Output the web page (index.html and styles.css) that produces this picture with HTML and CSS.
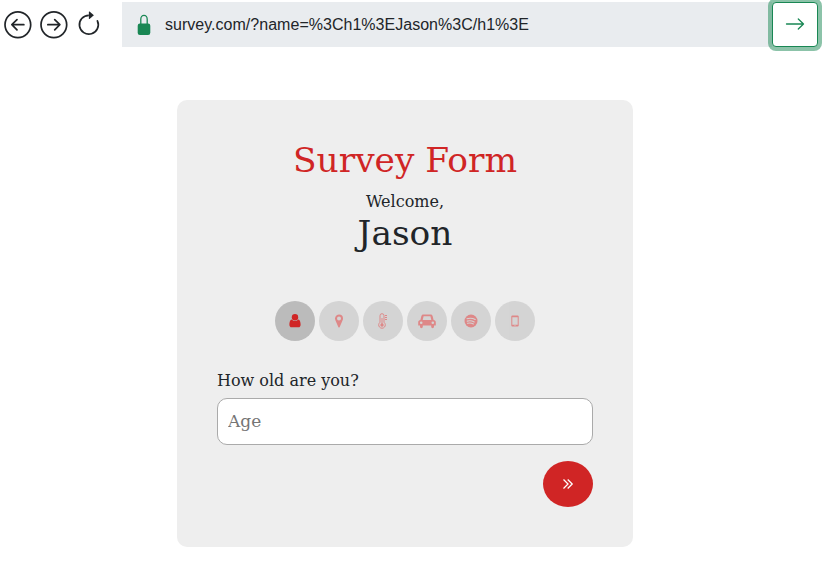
FILE: index.html
```html
<!DOCTYPE html>
<html lang="en">
<head>
<meta charset="utf-8">
<title>Survey Form</title>
<link rel="stylesheet" href="styles.css">
</head>
<body>
<header class="browser-bar">
  <nav class="nav">
    <svg class="nav-icon" viewBox="0 0 16 16"><path fill-rule="evenodd" d="M1 8a7 7 0 1 0 14 0A7 7 0 0 0 1 8zm15 0A8 8 0 1 1 0 8a8 8 0 0 1 16 0zm-4.500-.5a.5.5 0 0 1 0 1H5.707l2.147 2.146a.5.5 0 0 1-.708.708l-3-3a.5.5 0 0 1 0-.708l3-3a.5.5 0 1 1 .708.708L5.707 7.500H11.500z"/></svg>
    <svg class="nav-icon" viewBox="0 0 16 16"><path fill-rule="evenodd" d="M1 8a7 7 0 1 0 14 0A7 7 0 0 0 1 8zm15 0A8 8 0 1 1 0 8a8 8 0 0 1 16 0zM4.500 7.500a.5.5 0 0 0 0 1h5.793l-2.147 2.146a.5.5 0 0 0 .708.708l3-3a.5.5 0 0 0 0-.708l-3-3a.5.5 0 1 0-.708.708L10.293 7.500H4.500z"/></svg>
    <svg class="nav-icon reload" viewBox="0 0 16 16"><path fill-rule="evenodd" d="M8 3a5 5 0 1 0 4.546 2.914.5.5 0 0 1 .908-.417A6 6 0 1 1 8 2v1z"/><path d="M8 4.466V.534a.25.25 0 0 1 .41-.192l2.360 1.966c.12.1.12.284 0 .384L8.410 4.658A.25.25 0 0 1 8 4.466z"/></svg>
  </nav>
  <div class="address">
    <svg class="lock" viewBox="0 0 14 22"><path d="M3.800 10V5.200a3.200 3.800 0 0 1 6.400 0V10" fill="none" stroke="currentColor" stroke-width="1.300"/><rect x=".7" y="9.500" width="12.600" height="11.500" rx="2.200"/></svg>
    <span class="url">survey.com/?name=%3Ch1%3EJason%3C/h1%3E</span>
  </div>
  <button class="go" aria-label="Go"><svg viewBox="0 0 20 16"><path d="M1.500 8h17M13.300 3 18.500 8l-5.200 5" fill="none" stroke="currentColor" stroke-width="1.300" stroke-linecap="round" stroke-linejoin="round"/></svg></button>
</header>
<main class="card">
  <h1 class="title">Survey Form</h1>
  <div class="welcome">Welcome,</div>
  <h1 class="name">Jason</h1>
  <div class="steps">
    <span class="step active"><svg width="12" height="14" viewBox="0 0 12 14"><circle cx="6" cy="3.300" r="3.200"/><path d="M2.700 5.400Q4.300 7 6 7T9.300 5.400C11 5.700 11.600 8 11.600 10.700c0 1.500-.8 2.600-2.100 2.600h-7C1.200 13.300.4 12.200.4 10.700.4 8 1 5.700 2.700 5.400z"/></svg></span>
    <span class="step"><svg width="8" height="14" viewBox="0 0 8 14"><path fill-rule="evenodd" d="M4 .5a4 4 0 0 1 4 4c0 .7-.1 1.200-.4 1.800L4.700 12.900q-.7 1.200-1.400 0L.4 6.300A4 4 0 0 1 4 .5zm0 2a2 2 0 1 0 0 4 2 2 0 0 0 0-4z"/></svg></span>
    <span class="step"><svg width="10" height="16" viewBox="0 0 10 16"><path d="M2 9.300V2.700a2 2 0 0 1 4 0v6.600a3.300 3.300 0 1 1-4 0z" fill="none" stroke="currentColor"/><circle cx="4" cy="12" r="1.700"/><path d="M3.500 5h1v7h-1zM7 2h2v1H7zm0 2h2v1H7zm0 2h2v1H7z"/></svg></span>
    <span class="step"><svg width="18" height="14" viewBox="0 0 18 14"><path fill-rule="evenodd" d="M5.300.5h7.400c1 0 1.700.6 1.900 1.500l1 4c1.300.1 2.200 1 2.200 2.200v3q0 .4-.4.4H16v1.200a1.400 1.400 0 0 1-2.800 0v-1.200H4.800v1.200a1.400 1.400 0 0 1-2.800 0v-1.200H.6q-.4 0-.4-.4v-3C.2 7 1.100 6.100 2.400 6l1-4C3.600 1.100 4.300.5 5.300.5zm.3 1.700L4.700 5.900h8.600l-.9-3.700zM3.200 7.400a1.300 1.300 0 1 0 0 2.600 1.300 1.300 0 0 0 0-2.600zm11.600 0a1.300 1.300 0 1 0 0 2.600 1.300 1.300 0 0 0 0-2.600z"/></svg></span>
    <span class="step"><svg width="14" height="14" viewBox="0 0 14 14"><circle cx="7" cy="7" r="6.500"/><path d="M3 4.700q4.400-1.200 8.200.8M3.200 7.100q3.800-1 7 .8M3.500 9.300q3.300-.7 5.900.7" fill="none" stroke="#bbb" stroke-width="1.100" stroke-linecap="round"/></svg></span>
    <span class="step"><svg width="8" height="14" viewBox="0 0 8 14"><path fill-rule="evenodd" d="M1.400 1.500h5.200q1.100 0 1.100 1.100v8.800q0 1.100-1.100 1.100H1.400Q.3 12.500.3 11.400V2.600q0-1.100 1.100-1.100zM1.300 3.300v7.400h5.400V3.300z"/><circle cx="4" cy="11.600" r=".5" fill="#bbb"/></svg></span>
  </div>
  <label class="label" for="age">How old are you?</label>
  <input class="field" id="age" placeholder="Age">
  <button class="next" aria-label="Next"><svg width="12" height="12" viewBox="0 0 12 12"><path d="m1.500 1.500 4.500 4.500-4.500 4.500M5.700 1.500l4.500 4.500-4.500 4.500" fill="none" stroke="currentColor" stroke-width="1.300"/></svg></button>
</main>
</body>
</html>
```
FILE: styles.css
```css
* { box-sizing: border-box; }
body { margin: 0; background: #fff; color: #212529; font: 16px/24px "DejaVu Serif", serif; overflow: hidden; }
svg { display: block; fill: currentColor; overflow: visible; }
.browser-bar { display: flex; height: 45px; margin: 2px 4px 0 4px; font-family: "Liberation Sans", sans-serif; }
.nav { display: flex; gap: 8px; width: 118px; padding-top: 9px; }
.nav-icon { width: 28px; height: 28px; padding: 0 .3px .6px 0; }
.reload { margin-left: -1px; }
.address { flex: 1; display: flex; align-items: center; background: #e9ecef; padding-left: 15px; }
.lock { width: 14px; height: 22px; margin-right: 14px; color: #198754; }
.url { font-size: 16px; letter-spacing: .025px; }
.go { display: flex; align-items: center; justify-content: center; width: 46px; height: 45px; padding: 0; background: #fff; color: #198754; border: 1px solid #198754; border-radius: 4px; box-shadow: 0 0 0 4px rgba(25, 135, 84, .5); position: relative; }
.go svg { width: 20px; height: 16px; margin-top: -1px; }
.card { width: 456px; height: 447px; margin: 53px 0 0 177px; padding: 40px; background: #eee; border-radius: 10px; }
.title, .name { margin: 0; font-weight: 400; font-size: 34.400px; line-height: 41px; text-align: center; }
.title { color: #d02525; margin-bottom: 9px; }
.welcome { text-align: center; }
.name { line-height: 38px; }
.steps { display: flex; justify-content: center; gap: 4px; margin-top: 49px; }
.step { display: flex; align-items: center; justify-content: center; width: 40px; height: 40px; border-radius: 50%; background: #bbb; color: #d02525; opacity: .5; }
.active { opacity: 1; }
.label { display: block; margin-top: 28px; }
.field { display: block; width: 376px; height: 47px; margin-top: 5px; padding: 9px 10px 11px; border: 1px solid #aaa; border-radius: 10px; background: #fff; font: 17px "DejaVu Serif", serif; }
.field::placeholder { color: #757575; }
.next { display: flex; align-items: center; justify-content: center; width: 50px; height: 46px; margin: 16px 0 0 auto; padding: 0; border: 0; border-radius: 50%; background: #d02525; color: #fff; }
```
